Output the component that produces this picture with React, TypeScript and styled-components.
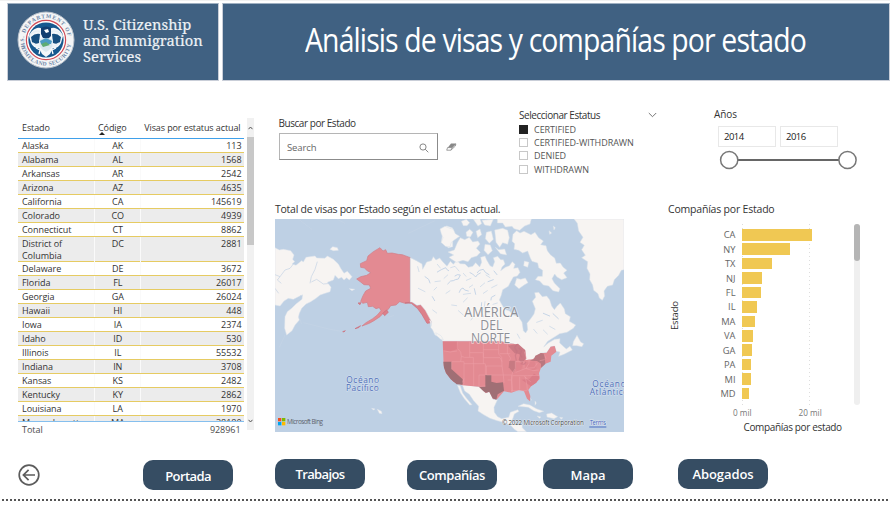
import React from "react";
import styled, { createGlobalStyle, css } from "styled-components";

const GlobalStyle = createGlobalStyle`
  * { box-sizing: border-box; }
  body {
    margin: 0;
    background: #fff;
    font-family: "Open Sans", "Noto Sans", sans-serif;
    color: #333;
    overflow: hidden;
  }
`;

const Page = styled.div`
  width: 890px;
  height: 514px;
  display: flex;
  flex-direction: column;
  overflow: hidden;
  border-top: 1px solid #f1f1f1;
`;

const Header = styled.header`
  display: flex;
  gap: 3px;
  height: 80px;
  padding: 2px 0 0 7px;
`;

const Banner = styled.div<{ $width: number }>`
  width: ${(p) => p.$width}px;
  height: 78px;
  background: #406182;
  border: 1px solid #c9ced8;
  border-top-color: #9fb0c2;
  display: flex;
  align-items: center;
  color: #fff;
`;

const Agency = styled.div`
  font-family: "Noto Serif", "Liberation Serif", serif;
  font-size: 15px;
  line-height: 15.7px;
  letter-spacing: 0.05px;
  margin-left: 8px;
  padding-bottom: 2px;
  color: #eef2f6;
  white-space: nowrap;
  -webkit-text-stroke: 0.2px #eef2f6;
  transform: scaleX(0.98);
  transform-origin: left;
`;

const Title = styled.h1`
  margin: 0 0 5px 82px;
  font-size: 33px;
  font-weight: 400;
  letter-spacing: -1px;
  white-space: nowrap;
  transform: scaleX(0.86);
  transform-origin: left;
`;

const Main = styled.main`
  display: flex;
  height: 361px;
  padding-left: 18px;
`;

const TablePanel = styled.section`
  width: 236px;
  margin-top: 37px;
  display: flex;
  height: 320px;
`;

const TableBody = styled.div`
  width: 226px;
  font-size: 9px;
  letter-spacing: -0.05px;
`;

const tableGrid = css`
  display: grid;
  grid-template-columns: 76px 46px 104px;
`;

const TableHead = styled.div`
  ${tableGrid}
  height: 21px;
  border-bottom: 1px solid #3fa0ea;
  line-height: 17px;
  letter-spacing: -0.1px;
  white-space: nowrap;
`;

const RowsClip = styled.div`
  height: 282px;
  overflow: hidden;
`;

const Row = styled.div<{ $tall?: boolean; $shaded: boolean }>`
  ${tableGrid}
  height: ${(p) => (p.$tall ? 25 : 14)}px;
  background: ${(p) => (p.$shaded ? "#ececec" : "#fff")};
  border-bottom: 1px solid #e6cb62;
  line-height: 12px;
`;

const Cell = styled.div<{ $align?: string; $divided?: boolean }>`
  text-align: ${(p) => p.$align || "left"};
  padding: ${(p) => (p.$divided ? "1px 2.5px 0 3px" : "1px 3.5px 0 4px")};
  border-left: ${(p) => (p.$divided ? "1px solid #fafafa" : "0")};
`;

const SortMark = styled.span`
  display: block;
  width: 0;
  margin: -4px 0 0 1px;
  border: 3px solid transparent;
  border-top-width: 0;
  border-bottom-color: #222;
`;

const TotalRow = styled.div`
  ${tableGrid}
  border-top: 1px solid #85bfee;
  line-height: 14px;
  color: #4c4c4c;
`;

const TableScroll = styled.div`
  width: 7px;
  margin-left: 3px;
  height: 312px;
  background: #f1f1f1;
  display: flex;
  flex-direction: column;
  align-items: center;
  justify-content: space-between;
  padding: 8px 0 7px;
`;

const TableThumb = styled.div`
  width: 7px;
  height: 108px;
  margin: 7px 0 auto;
  background: #c8c8c8;
`;

const Workspace = styled.div`
  width: 615px;
  margin-left: 21px;
`;

const Slicers = styled.div`
  height: 120px;
  display: flex;
`;

const Label = styled.div<{ $spacing?: number }>`
  font-size: 10px;
  line-height: 14px;
  letter-spacing: ${(p) => p.$spacing ?? -0.45}px;
  white-space: nowrap;
`;

const SearchSlicer = styled.div`
  width: 240px;
  padding: 35px 0 0 3.5px;
`;

const SearchLine = styled.div`
  display: flex;
  align-items: center;
  gap: 8px;
  margin-top: 3px;
`;

const SearchBox = styled.div`
  width: 159px;
  height: 27px;
  border: 1px solid #8b8b8b;
  border-top-color: #b5b5b5;
  border-left-color: #b5b5b5;
  display: flex;
  align-items: center;
  justify-content: space-between;
  padding: 2px 8px 0 7.5px;
  font-size: 9.5px;
  letter-spacing: -0.1px;
  color: #666;
`;

const StatusSlicer = styled.div`
  width: 199px;
  padding: 26px 0 0 4px;
`;

const StatusHead = styled.div`
  display: flex;
  justify-content: space-between;
  align-items: center;
  width: 138px;
  height: 16px;
  padding-bottom: 1px;
`;

const Option = styled.div`
  display: flex;
  align-items: center;
  gap: 6px;
  height: 13.2px;
  font-size: 9px;
  letter-spacing: -0.04px;
  color: #555;
`;

const CheckBox = styled.span<{ $on: boolean }>`
  width: 9px;
  height: 9px;
  border: 1px solid ${(p) => (p.$on ? "#222" : "#c8c8c8")};
  background: ${(p) => (p.$on ? "#222" : "#fff")};
`;

const YearSlicer = styled.div`
  width: 170px;
  padding-top: 26px;
`;

const YearInputs = styled.div`
  display: flex;
  gap: 4px;
  margin: 5px 0 3px 4px;
`;

const YearInput = styled.div`
  width: 58px;
  height: 21px;
  border: 1px solid #e8e8e8;
  padding-left: 5px;
  line-height: 20px;
  font-size: 9.5px;
  letter-spacing: -0.5px;
  color: #222;
`;

const Visuals = styled.div`
  height: 240px;
  display: flex;
`;

const MapVisual = styled.section`
  width: 349px;
`;

const VisualTitle = styled.div<{ $spacing: number }>`
  font-size: 10.5px;
  line-height: 17px;
  height: 18px;
  letter-spacing: ${(p) => p.$spacing}px;
  white-space: nowrap;
`;

const MapSvg = styled.svg`
  display: block;
  width: 349px;
  height: 213px;
  background: #bed0e4;
`;

const ChartVisual = styled.section`
  width: 222px;
  padding-left: 44px;
`;

const ChartBody = styled.div`
  display: flex;
  width: 194px;
  height: 183px;
  margin-top: 5px;
`;

const AxisName = styled.div`
  width: 12px;
  display: flex;
  align-items: center;
  justify-content: center;
  font-size: 9.5px;
  letter-spacing: -0.2px;
  writing-mode: vertical-rl;
  transform: rotate(180deg);
`;

const Plot = styled.div`
  width: 130px;
  margin-left: 17px;
  padding-top: 3.6px;
  background:
    repeating-linear-gradient(#ddd 0 1px, transparent 1px 4px) 45px 0 / 1px 100% no-repeat,
    repeating-linear-gradient(#ddd 0 1px, transparent 1px 4px) 112px 0 / 1px 100% no-repeat;
`;

const BarRow = styled.div`
  display: flex;
  align-items: center;
  height: 14.43px;
  font-size: 9.3px;
  color: #666;
`;

const BarLabel = styled.div`
  width: 38.5px;
  margin-right: 6.5px;
  text-align: right;
`;

const Bar = styled.div`
  height: 11.5px;
  background: #f0c853;
`;

const ChartScroll = styled.div`
  width: 6px;
  height: 181px;
  margin-left: 27px;
  border-radius: 3px;
  background: #efefef;
  flex: none;
`;

const ChartThumb = styled.div`
  height: 37px;
  border-radius: 3px;
  background: #b5b5b5;
`;

const Ticks = styled.div`
  display: flex;
  gap: 47px;
  margin: 0 0 0 65px;
  font-size: 8.2px;
  line-height: 12px;
  color: #777;
  white-space: nowrap;
`;

const XAxisName = styled.div`
  margin: 1px 0 0 75.5px;
  font-size: 10px;
  letter-spacing: -0.35px;
  line-height: 15px;
  white-space: nowrap;
`;

const Nav = styled.nav`
  display: flex;
  height: 57px;
  padding: 17px 0 0 18px;
`;

const BackButton = styled.button`
  width: 22px;
  height: 22px;
  padding: 0;
  border: 0;
  background: none;
  margin: 5px 103px 0 0;
`;

const NavButton = styled.button<{ $gap: number; $drop?: number; $textDrop?: number; $spacing?: number }>`
  width: 90px;
  height: 30px;
  flex: none;
  margin: ${(p) => p.$drop ?? 0}px ${(p) => p.$gap}px 0 0;
  padding: ${(p) => p.$textDrop ?? 0}px 0 0;
  border: 0;
  border-radius: 10px;
  background: #364d63;
  color: #fff;
  font: 600 13px "Open Sans", "Noto Sans", sans-serif;
  letter-spacing: ${(p) => p.$spacing ?? -0.1}px;
`;

const DottedRule = styled.div`
  height: 2px;
  margin: 0 0 0 2px;
  background: repeating-linear-gradient(90deg, #555 0 2px, transparent 2px 4px);
`;

type State = [string, string, string];

const states: State[] = [
  ["Alaska", "AK", "113"],
  ["Alabama", "AL", "1568"],
  ["Arkansas", "AR", "2542"],
  ["Arizona", "AZ", "4635"],
  ["California", "CA", "145619"],
  ["Colorado", "CO", "4939"],
  ["Connecticut", "CT", "8862"],
  ["District of Columbia", "DC", "2881"],
  ["Delaware", "DE", "3672"],
  ["Florida", "FL", "26017"],
  ["Georgia", "GA", "26024"],
  ["Hawaii", "HI", "448"],
  ["Iowa", "IA", "2374"],
  ["Idaho", "ID", "530"],
  ["Illinois", "IL", "55532"],
  ["Indiana", "IN", "3708"],
  ["Kansas", "KS", "2482"],
  ["Kentucky", "KY", "2862"],
  ["Louisiana", "LA", "1970"],
  ["Massachusetts", "MA", "38180"],
];

const companies: [string, number][] = [
  ["CA", 69.5],
  ["NY", 47.5],
  ["TX", 30],
  ["NJ", 19.5],
  ["FL", 18.5],
  ["IL", 14.5],
  ["MA", 12.5],
  ["VA", 10.5],
  ["GA", 9.5],
  ["PA", 9],
  ["MI", 8.5],
  ["MD", 6.5],
];

const SealSvg = styled.svg`
  flex: none;
  margin: 0 0 5px 9px;
`;

const Seal = () => (
  <SealSvg width="58" height="58" viewBox="-29 -29 58 58">
    <defs>
      <path id="sealTop" d="M-20.3 8.5A22 22 0 1 1 20.3 8.5" />
      <path id="sealBottom" d="M-25.2 3.5A25.4 25.4 0 0 0 25.2 3.5" />
    </defs>
    <circle r="28" fill="#f4f5f6" stroke="#b9c2cc" strokeWidth="1" />
    <circle r="19.6" fill="#fff" stroke="#cf4a55" strokeWidth="1.2" />
    <circle r="17.6" fill="#16598f" />
    <g fontFamily="Liberation Serif" fontSize="5.6" fontWeight="700" fill="#6d87a8">
      <text><textPath href="#sealTop" textLength="74">U.S. DEPARTMENT OF</textPath></text>
      <text><textPath href="#sealBottom" textLength="72">HOMELAND SECURITY</textPath></text>
    </g>
    <path d="M-17-4Q-15-10-9-12Q-5-13-3-10L-4-4Q-1 0 0 0Q1 0 4-4L3-10Q5-13 9-12Q15-10 17-4L15 3Q12 9 7 8L4 14L0 17L-4 14L-7 8Q-12 9-15 3Z" fill="#f3f7fa" />
    <path d="M-15-3Q-11-7-6-6L-7 3Q-11 5-14 2ZM15-3Q11-7 6-6L7 3Q11 5 14 2Z" fill="#174f80" />
    <path d="M-16-5Q-10-11-5-8M16-5Q10-11 5-8M-13 3Q-9 7-6 6M13 3Q9 7 6 6" fill="none" stroke="#e8f0f5" strokeWidth="1.5" />
    <path d="M-5-12Q0-15 5-12L5-4L2-1L-3-2L-5-6Z" fill="#123e70" />
    <path d="M-2-10L2-11L3-8L0-7Z" fill="#fff" />
    <path d="M-7 0Q0-4 7 0L6 7Q3 11 0 12Q-3 11-6 7Z" fill="#d9e8ef" />
    <path d="M-6 1L0-2L6 1L5 4H-5Z" fill="#4b9bc4" />
    <path d="M-5 4L0 2L4 5L-3 7Z" fill="#5eac73" />
    <path d="M-10 8L-6 10L-7 14M10 8L6 10L7 14" fill="none" stroke="#fff" strokeWidth="1.3" />
  </SealSvg>
);

const RangeTrack = styled.svg`
  display: block;
`;

const land = "#f7f4f2";
const visa = "#e38a92";

const MapDrawing = () => (
  <MapSvg viewBox="0 0 1047 639" preserveAspectRatio="none">
    <g transform="translate(-15 -57)">
      <g fill={land} stroke="#dfe5ec" strokeWidth="1.5" strokeLinejoin="round">
        <path d="M15 143L28 150L40 148L62 152L72 165L68 178L74 185L66 192L78 196L95 182L100 186L108 172L135 168L140 174L165 175L172 168L190 178L205 192L212 205L222 220L232 214L246 230L238 240L230 233L222 240L215 232L205 236L195 226L190 240L172 247L183 262L180 275L165 280L150 285L138 295L122 305L108 312L95 325L88 340L85 352L88 360L75 375L66 392L50 405L44 385L45 350L52 335L65 325L78 312L96 298L98 284L85 290L70 298L55 295L42 303L30 318L15 315Z" />
        <path d="M180 148L188 140L202 143L205 151L190 152ZM238 266L254 268L246 272ZM520 85L530 78L548 84L548 140L535 143L524 134L514 128Z" />
        <path d="M305 625L315 627L310 630ZM322 628L334 634L336 641L328 640Z" />
      </g>
      <path d="M15 224L30 230L22 240L34 250M30 230L45 210L60 205L70 192M15 265L26 280M142 185L135 208L124 230L120 250M124 246L140 238L160 252L182 250M85 300L92 286" fill="none" stroke="#c2d2e4" strokeWidth="2" />
      <path d="M85 57L128 90M200 57L225 70M415 100L495 62M88 350L94 372M100 368L180 388L215 394M45 405L28 442M355 352L372 346" fill="none" stroke="#cbd8e7" strokeWidth="1" />
      <path d="M330 143L339 153L347 149L352 160L366 159L385 163L397 164L421 173L421 306L405 310L389 305L378 315L362 317L355 328L342 337L330 350L312 362L298 370L276 378L288 368L308 356L322 345L333 332L328 323L318 326L308 319L295 320L292 307L278 310L272 304L279 287L287 273L302 265L298 255L282 254L272 246L260 237L272 230L290 226L302 218L290 211L284 204L272 202L271 191L290 182L294 168L310 155Z" fill={visa} stroke="#d07d87" strokeWidth="2" strokeLinejoin="round" />
      <path d="M405 309L426 306L440 317L452 313L467 330L486 350L485 368L471 370L456 344L443 326L424 310ZM338 340L350 330L355 337L344 347ZM255 386L272 377L266 383ZM218 395L226 392L222 396ZM264 309L273 308L270 314Z" fill="#dc7f89" stroke="#ca6e7b" strokeWidth="2" />
      <path d="M421 173V306" stroke="#bd9ca3" strokeWidth="2" />
    </g>
    <g transform="translate(465 -57)">
      <g fill={land} stroke="#d8e0e9" strokeWidth="1.5" strokeLinejoin="round">
        <path d="M-59 173L-41 182L-24 192L-22 208L-10 186L4 182L10 170L18 180L29 174L38 185L51 199L61 184L70 193L81 181L90 191L105 192L115 202L128 199L137 188L149 201L155 187L152 172L165 168L170 180L180 197L188 201L194 185L190 173L203 169L212 179L220 179L225 192L216 201L212 212L226 202L238 197L247 185L255 193L251 205L264 203L270 217L262 228L250 231L242 245L235 259L218 269L214 285L208 300L215 313L224 328L239 333L247 343L265 350L276 366L280 392L287 399L293 389L291 370L302 356L312 342L316 326L307 304L317 292L314 278L326 277L337 290L350 288L359 299L365 318L373 329L381 319L391 309L403 327L406 341L421 350L418 364L437 375L430 385L411 397L389 401L370 413L353 424L341 441L355 429L374 418L390 416L389 429L402 441L409 447L420 439L427 450L402 463L386 469L390 456L379 454L374 438L362 440L350 458L332 459L309 478L288 484L282 448L250 432L215 423L38 423L28 411L15 405L8 390L2 382L5 366L-14 331L-28 314L-39 316L-54 306L-59 306Z" />
        <path d="M30 87L45 79L60 85L70 88L76 101L89 109L74 119L64 127L60 140L46 139L34 127L39 113L34 101Z" />
        <path d="M54 156L73 150L82 128L91 113L104 119L118 112L128 126L144 123L150 132L139 145L151 157L141 168L124 173L114 185L99 181L79 187L65 178L57 172L71 165Z" />
        <path d="M94 64L109 58L119 68L111 77L100 77ZM108 97L119 88L129 97L121 111L110 109ZM130 58L150 57L155 71L144 78ZM138 94L150 87L155 104L143 113ZM156 61L190 58L181 78L164 75ZM169 97L184 93L190 118L178 130L166 116ZM194 90L218 85L233 91L238 113L233 133L218 128L209 142L198 127ZM196 142L206 149L224 147L230 165L211 161ZM202 57H304L300 72L284 78L269 91L252 86L246 79L226 81L218 69L202 69ZM165 133L181 135L187 152L174 164L162 151Z" />
        <path d="M249 103L260 92L270 99L282 94L303 104L315 97L326 113L340 123L332 134L348 137L352 152L361 164L374 174L379 190L391 189L399 201L411 211L401 219L411 233L395 239L381 231L374 222L366 236L373 249L390 266L386 276L369 272L356 258L340 255L329 243L316 239L324 229L337 229L338 211L326 203L323 189L306 184L301 174L293 153L278 159L266 151L252 148L254 131L246 124Z" />
        <path d="M260 235L272 238L286 234L294 248L281 256L267 266L254 255ZM283 183L297 187L293 202L281 197ZM430 425L441 406L452 426L461 431L456 440L440 437L428 437ZM17 398L33 407L40 419L31 417L19 406ZM-1 360L5 366L3 379ZM370 78L376 83L372 90ZM357 92L365 99L359 103Z" />
        <path d="M432 57L442 70L446 93L459 112L450 127L463 136L455 149L466 166L455 173L473 185L471 205L480 222L479 239L488 255L491 271L504 281L508 294L517 301L524 288L522 273L532 259L548 255L553 239L566 226L574 211L582 209V57Z" />
        <path d="M82 552L97 555L104 573L118 583L131 602L146 619L144 633L161 644L180 655L202 662L226 668L242 676L253 688L264 695H289L277 683L276 672L260 673L244 666L249 654L253 642L267 634L263 629L241 637L236 652L215 656L203 650L193 637L192 622L202 600L189 598L178 575L167 579L147 560L98 554ZM82 555L91 558L98 579L109 594L126 614L119 615L102 595L91 578Z" />
        <path d="M264 619L281 611L300 615L319 626L341 634L328 638L311 632L295 622L279 620ZM350 642L365 639L383 650L372 656L351 651ZM321 648L333 651L328 655ZM389 652L399 653L393 658ZM315 603L319 609L315 616ZM299 594L306 601Z" />
      </g>
      <g fill="none" stroke="#bed0e4" strokeLinecap="round">
        <path d="M22 216L34 209L47 203L50 208L56 212M53 252L62 243L70 242L76 239L85 237L91 225L82 224L75 228M88 277L92 268L99 264L104 270L115 273M133 266L137 283M155 308L153 332L160 350M142 218L148 211L160 208L166 217L177 224M120 218L128 222L137 231L142 224L151 219M192 213L201 224M7 290L14 302M-15 230L-4 238L0 249M195 286L184 292L183 300M180 322L190 333M340 340L359 348M369 341L385 356M174 245L190 239" strokeWidth="2.6" />
        <path d="M-37 200L-33 215M22 193L31 204M62 203L75 199L87 213M42 235L53 225M15 245L31 243M109 241L123 235M151 260L164 249M202 309L189 313M60 272L48 280M340 390L352 402M359 379L375 388M311 388L321 400M-35 265L-15 275M12 270L20 262M65 315L80 317M123 360L130 350M20 339L8 330M100 306L112 294M100 283L122 280M165 305L162 328M85 332L100 345M262 402L269 415M201 255L185 263M320 367L337 361M160 280L172 272M128 255L118 262M168 225L180 233M100 220L108 229" strokeWidth="1.8" />
      </g>
      <path d="M38 424H215L227 430L252 431L285 450L287 480L308 478L332 460L350 458L362 440L374 438L379 455L364 467L362 485L342 493L334 500L327 520L329 537L318 548L304 558L295 570L301 588L300 604L291 596L282 574L267 570L244 578L222 574L201 598L189 597L178 575L167 579L147 560L98 556L70 545L48 520L41 497Z" fill={visa} />
      <path d="M234 437L264 431L286 451L288 475L277 490L266 480L270 463L254 460Z" fill="#cb7a84" />
      <path d="M39 425H82L84 446L61 454L40 452Z" fill="#de808a" />
      <path d="M40 485H65V508L98 538V554L80 553L62 538L48 519L42 503Z" fill="#a06f75" />
      <path d="M166 525H184V545L200 549L219 547L222 572L203 583L199 599L188 595L178 575L168 578L160 573L147 560H166Z" fill="#a06f75" />
      <path d="M238 482H257V505L250 518L236 502Z" fill="#c77a82" />
      <path d="M300 482L312 477L316 467L333 459L343 461L346 492L333 504L333 491L321 483Z" fill="#ba777f" />
      <path d="M275 539L299 536L312 521L329 530L319 548L303 559Z" fill="#db7e89" />
      <path d="M257 486L278 489L274 511L259 517ZM284 489L313 484L320 506L305 514L287 504Z" fill="#e0858e" />
      <path d="M82 424V445L92 456L94 469L104 472H119M94 469L92 485H65M40 452L60 456L81 453M65 485V508M92 485H102V550L98 555M102 491H131V557M102 535L98 547M119 424V472H130V491H166V525H147V560M119 458H160V491M160 426V472M160 473H210L216 485M160 449H206M206 424V462L215 472L216 498H166M169 498V525H220L222 548M216 498L220 525M220 525H245V579M232 430V459L242 475L238 483M209 461H241M256 482V505L247 519L245 540L248 575M257 517L288 505L297 490V477M257 485H282V503M288 505L313 503L322 489M289 506L309 512L326 510M248 527H292L329 526M269 530V569M286 530L291 557L292 571M282 529L302 545M243 572H291M329 482L344 479M342 461L348 476M283 455L290 477M166 558L148 560M233 540H244" fill="none" stroke="#efa3aa" strokeWidth="1.4" />
      <path d="M260 433L254 443L261 455L256 467L259 482M266 444L275 451L270 463L276 472M272 491L282 493L288 486" fill="none" stroke="#c27182" strokeWidth="3.5" opacity=".5" />
    </g>
    <g fontFamily="Open Sans, Noto Sans, sans-serif">
      <g fontSize="41" fill="#8e9097" stroke="#fff" strokeWidth="5" strokeOpacity=".55" paintOrder="stroke">
        <text x="568" y="294" textLength="162" lengthAdjust="spacingAndGlyphs">AMÉRICA</text>
        <text x="616" y="333" textLength="66" lengthAdjust="spacingAndGlyphs">DEL</text>
        <text x="588" y="373" textLength="118" lengthAdjust="spacingAndGlyphs">NORTE</text>
      </g>
      <g fontSize="25" fill="#4d6cb6" stroke="#dbe5f2" strokeWidth="2.5" paintOrder="stroke">
        <text x="214" y="492" textLength="98">Océano</text>
        <text x="213" y="517" textLength="98">Pacífico</text>
        <text x="952" y="504" textLength="100">Océano</text>
        <text x="944" y="529" textLength="116">Atlántico</text>
      </g>
      <text x="36" y="614" fontSize="19" fill="#5c626c" textLength="108">Microsoft Bing</text>
      <g fontSize="19" stroke="#f5f5f5" strokeWidth="2" paintOrder="stroke">
        <text x="681" y="619" fill="#43474e" textLength="246">© 2022 Microsoft Corporation</text>
        <text x="944" y="619" fill="#365cba" textLength="49">Terms</text>
      </g>
    </g>
    <path d="M943 624H994" stroke="#365cba" strokeWidth="2.5" />
    <path d="M9 597H19V607H9Z" fill="#f25022" />
    <path d="M21 597H31V607H21Z" fill="#7fba00" />
    <path d="M9 609H19V619H9Z" fill="#00a4ef" />
    <path d="M21 609H31V619H21Z" fill="#ffb900" />
  </MapSvg>
);

const Chevron = ({ up }: { up?: boolean }) => (
  <svg width="5" height="4" viewBox="0 0 5 4">
    <path d={up ? "M.5 3.2L2.5 1L4.5 3.2" : "M.5 .8L2.5 3L4.5 .8"} fill="none" stroke="#555" strokeWidth="1" />
  </svg>
);

export default function App() {
  return (
    <>
      <GlobalStyle />
      <Page>
        <Header>
          <Banner $width={212}>
            <Seal />
            <Agency>
              U.S. Citizenship
              <br />
              and Immigration
              <br />
              Services
            </Agency>
          </Banner>
          <Banner $width={668}>
            <Title>Análisis de visas y compañías por estado</Title>
          </Banner>
        </Header>

        <Main>
          <TablePanel>
            <TableBody>
              <TableHead>
                <Cell>Estado</Cell>
                <Cell>
                  Código
                  <SortMark />
                </Cell>
                <Cell $align="right">Visas por estatus actual</Cell>
              </TableHead>
              <RowsClip>
                {states.map(([name, code, count], i) => (
                  <Row key={code} $shaded={i % 2 === 1} $tall={code === "DC"}>
                    <Cell>{name}</Cell>
                    <Cell $align="center" $divided>{code}</Cell>
                    <Cell $align="right" $divided>{count}</Cell>
                  </Row>
                ))}
              </RowsClip>
              <TotalRow>
                <Cell>Total</Cell>
                <Cell />
                <Cell $align="right">928961</Cell>
              </TotalRow>
            </TableBody>
            <TableScroll>
              <Chevron up />
              <TableThumb />
              <Chevron />
            </TableScroll>
          </TablePanel>

          <Workspace>
            <Slicers>
              <SearchSlicer>
                <Label>Buscar por Estado</Label>
                <SearchLine>
                  <SearchBox>
                    Search
                    <svg width="10" height="10" viewBox="0 0 10 10" fill="none" stroke="#888">
                      <circle cx="4" cy="4" r="3.1" />
                      <path d="M6.2 6.2L9.3 9.3" />
                    </svg>
                  </SearchBox>
                  <svg width="11" height="8" viewBox="0 0 11 8">
                    <path d="M5 .5H10.3L6.7 5H1.5Z" fill="#888" />
                    <path d="M1.6 4.6H6.2L4.9 7.2H.7ZM6.2 4.6L9.8 1L9.4 3L4.9 7.2" fill="#fff" stroke="#888" strokeWidth=".8" />
                  </svg>
                </SearchLine>
              </SearchSlicer>
              <StatusSlicer>
                <StatusHead>
                  <Label>Seleccionar Estatus</Label>
                  <svg width="9" height="6" viewBox="0 0 9 6">
                    <path d="M.8 1L4.5 4.7L8.2 1" fill="none" stroke="#666" strokeWidth=".9" />
                  </svg>
                </StatusHead>
                {["CERTIFIED", "CERTIFIED-WITHDRAWN", "DENIED", "WITHDRAWN"].map((name, i) => (
                  <Option key={name}>
                    <CheckBox $on={i === 0} />
                    {name}
                  </Option>
                ))}
              </StatusSlicer>
              <YearSlicer>
                <Label $spacing={-0.1}>Años</Label>
                <YearInputs>
                  <YearInput>2014</YearInput>
                  <YearInput>2016</YearInput>
                </YearInputs>
                <RangeTrack width="144" height="22" viewBox="0 0 144 22">
                  <path d="M15 10H134" stroke="#666" strokeWidth="2" />
                  <g fill="#fff" stroke="#777" strokeWidth="1.5">
                    <circle cx="15.2" cy="10" r="8.6" />
                    <circle cx="133.5" cy="10" r="8.6" />
                  </g>
                </RangeTrack>
              </YearSlicer>
            </Slicers>

            <Visuals>
              <MapVisual>
                <VisualTitle $spacing={-0.26}>Total de visas por Estado según el estatus actual.</VisualTitle>
                <MapDrawing />
              </MapVisual>
              <ChartVisual>
                <VisualTitle $spacing={-0.2}>Compañías por Estado</VisualTitle>
                <ChartBody>
                  <AxisName>Estado</AxisName>
                  <Plot>
                    {companies.map(([code, width]) => (
                      <BarRow key={code}>
                        <BarLabel>{code}</BarLabel>
                        <Bar style={{ width }} />
                      </BarRow>
                    ))}
                  </Plot>
                  <ChartScroll>
                    <ChartThumb />
                  </ChartScroll>
                </ChartBody>
                <Ticks>
                  <span>0 mil</span>
                  <span>20 mil</span>
                </Ticks>
                <XAxisName>Compañías por estado</XAxisName>
              </ChartVisual>
            </Visuals>
          </Workspace>
        </Main>

        <Nav>
          <BackButton aria-label="Atrás">
            <svg width="22" height="22" viewBox="0 0 22 22" fill="none" stroke="#5c5c5c" strokeWidth="1.7">
              <circle cx="11" cy="11" r="9.8" />
              <path d="M17 11H5.8M10.6 5.8L5.4 11L10.6 16.2" />
            </svg>
          </BackButton>
          <NavButton $gap={42} $drop={1} $textDrop={2} $spacing={-0.6}>Portada</NavButton>
          <NavButton $gap={42} $spacing={-0.65}>Trabajos</NavButton>
          <NavButton $gap={46} $drop={1} $spacing={-0.45}>Compañías</NavButton>
          <NavButton $gap={45} $textDrop={1}>Mapa</NavButton>
          <NavButton $gap={0}>Abogados</NavButton>
        </Nav>
        <DottedRule />
      </Page>
    </>
  );
}
